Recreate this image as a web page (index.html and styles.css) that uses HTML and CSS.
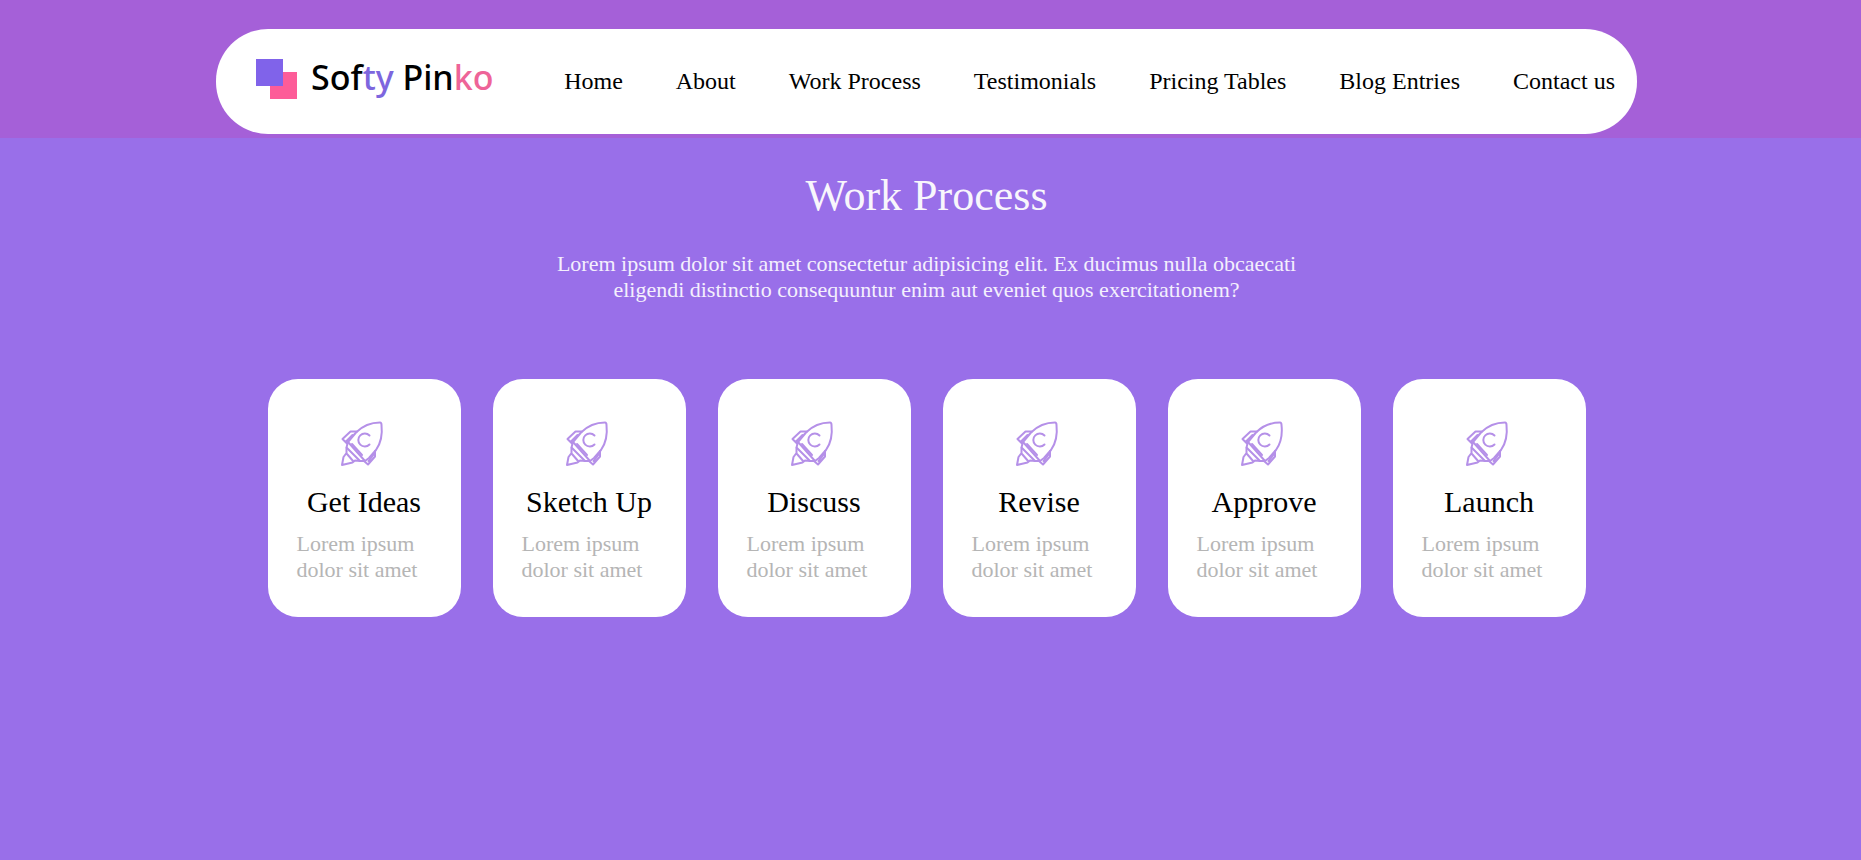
FILE: index.html
```html
<!DOCTYPE html>
<html lang="en">
<head>
<meta charset="utf-8">
<title>Softy Pinko</title>
<link rel="stylesheet" href="styles.css">
</head>
<body>
<svg class="defs" aria-hidden="true">
  <symbol id="rocket" viewBox="0 0 60 60">
    <g fill="none" stroke="#b590e8" stroke-width="2" stroke-linejoin="round" stroke-linecap="round">
      <path d="M46 9.500C37 9.500 28 13.500 22 19.500L14 29L31 48L35 45L42 37C47 30 48.500 21 47.500 12Q47.500 9.500 46 9.500Z"/>
      <path d="M23 18.500L16.500 18.500L8.500 26L13 30.500M18.500 22L12.500 28"/>
      <path d="M41 38V43.500L34 51.500L30 48M40 41L34.500 48"/>
      <path d="M14 29L12.500 34.500L26 48H31M18 31L28 42"/>
      <path d="M12.500 35V40L9.500 44L8 52L18.500 49.500L21 47.500L26 48M13 41L19.500 48.500"/>
      <path d="M35.500 22.500A6.500 6.500 0 1 0 35.500 31.500"/>
    </g>
  </symbol>
</svg>
<header class="header">
  <div class="bar">
    <a class="logo" href="#">
      <svg class="logo-mark" viewBox="0 0 41 40" aria-hidden="true"><rect x="14" y="13" width="27" height="27" fill="#fd5c98"/><rect width="27" height="27" fill="#8063ea"/></svg>
      <span class="logo-text">Sof<span class="violet">ty</span> Pin<span class="pink">ko</span></span>
    </a>
    <nav class="nav">
      <a href="#">Home</a>
      <a href="#">About</a>
      <a href="#">Work Process</a>
      <a href="#">Testimonials</a>
      <a href="#">Pricing Tables</a>
      <a href="#">Blog Entries</a>
      <a href="#">Contact us</a>
    </nav>
  </div>
</header>
<main class="process">
  <h1 class="title">Work Process</h1>
  <p class="intro">Lorem ipsum dolor sit amet consectetur adipisicing elit. Ex ducimus nulla obcaecati eligendi distinctio consequuntur enim aut eveniet quos exercitationem?</p>
  <div class="cards">
    <article class="card"><svg class="icon" aria-hidden="true"><use href="#rocket"/></svg><h2>Get Ideas</h2><p>Lorem ipsum dolor sit amet</p></article>
    <article class="card"><svg class="icon" aria-hidden="true"><use href="#rocket"/></svg><h2>Sketch Up</h2><p>Lorem ipsum dolor sit amet</p></article>
    <article class="card"><svg class="icon" aria-hidden="true"><use href="#rocket"/></svg><h2>Discuss</h2><p>Lorem ipsum dolor sit amet</p></article>
    <article class="card"><svg class="icon" aria-hidden="true"><use href="#rocket"/></svg><h2>Revise</h2><p>Lorem ipsum dolor sit amet</p></article>
    <article class="card"><svg class="icon" aria-hidden="true"><use href="#rocket"/></svg><h2>Approve</h2><p>Lorem ipsum dolor sit amet</p></article>
    <article class="card"><svg class="icon" aria-hidden="true"><use href="#rocket"/></svg><h2>Launch</h2><p>Lorem ipsum dolor sit amet</p></article>
  </div>
</main>
</body>
</html>
```
FILE: styles.css
```css
* { box-sizing: border-box; margin: 0; padding: 0; }
body {
  min-height: 100vh;
  background: #996fe9;
  color: #000;
  font-family: "Liberation Serif", "Times New Roman", serif;
}
a { color: inherit; text-decoration: none; }
.defs { position: absolute; width: 0; height: 0; }
.header {
  display: flex;
  justify-content: center;
  padding: 29px 32px 4px 24px;
  background: #a560d8;
}
.bar {
  display: flex;
  align-items: center;
  justify-content: space-between;
  min-height: 105px;
  width: 100%;
  max-width: 1421px;
  padding: 0 22px 0 40px;
  background: #fff;
  border-radius: 52px;
}
.logo { display: flex; align-items: center; gap: 14px; padding-bottom: 6px; }
.logo-mark { width: 41px; height: 40px; }
.logo-text {
  padding-bottom: 4px;
  font: 500 34px/48px "Noto Sans", "Open Sans", sans-serif;
}
.violet { color: #7d66de; }
.pink { color: #ee6498; }
.nav { display: flex; gap: 53px; padding-bottom: 2px; font-size: 24px; line-height: 28px; }
.process {
  display: flex;
  flex-direction: column;
  align-items: center;
  padding: 32px 32px 32px 24px;
}
.title {
  font-size: 44px;
  font-weight: 400;
  line-height: 52px;
  color: #f8f6fc;
}
.intro {
  max-width: 780px;
  margin: 29px 0 76px;
  font-size: 22px;
  line-height: 26px;
  text-align: center;
  color: #f4effd;
}
.cards {
  display: grid;
  grid-template-columns: repeat(6, 1fr);
  gap: 32px;
  width: 100%;
  max-width: 1318px;
}
.card {
  display: flex;
  flex-direction: column;
  align-items: center;
  padding: 34px 29px;
  background: #fff;
  border-radius: 30px;
}
.icon { width: 60px; height: 60px; }
.card h2 { margin: 12px 0; font-size: 30px; font-weight: 400; line-height: 34px; white-space: nowrap; }
.card p { align-self: stretch; font-size: 22px; line-height: 26px; color: #b5b5b5; }
```
